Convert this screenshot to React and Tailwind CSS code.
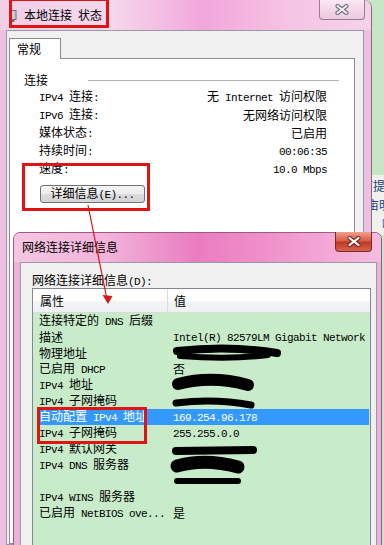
import React from 'react';

const ASCII = /([\x20-\x7e]+)/;

// SimSun-like mix: CJK in Noto, latin runs in a narrow mono
function Mix({ t }) {
  return (
    <span className="whitespace-pre">
      {t.split(ASCII).map((s, i) =>
        s && /^[\x20-\x7e]+$/.test(s) ? (
          <span key={i} className="font-['Liberation_Mono',monospace] text-[11px] tracking-[-0.6px]">
            {s}
          </span>
        ) : (
          s
        )
      )}
    </span>
  );
}

function CloseX({ outline, fill }) {
  return (
    <svg width="14" height="11" viewBox="0 0 14 11">
      <path d="M2.5 2 L11.5 9 M11.5 2 L2.5 9" stroke={outline} strokeWidth="4.2" strokeLinecap="round" />
      <path d="M2.5 2 L11.5 9 M11.5 2 L2.5 9" stroke={fill} strokeWidth="2.2" strokeLinecap="round" />
    </svg>
  );
}

const statusRows = [
  ['IPv4 连接:', '无 Internet 访问权限'],
  ['IPv6 连接:', '无网络访问权限'],
  ['媒体状态:', '已启用'],
  ['持续时间:', '00:06:35'],
  ['速度:', '10.0 Mbps'],
];

const detailRows = [
  ['连接特定的 DNS 后缀', ''],
  ['描述', 'Intel(R) 82579LM Gigabit Network'],
  ['物理地址', ''],
  ['已启用 DHCP', '否'],
  ['IPv4 地址', ''],
  ['IPv4 子网掩码', ''],
  ['自动配置 IPv4 地址', '169.254.96.178', true],
  ['IPv4 子网掩码', '255.255.0.0'],
  ['IPv4 默认网关', ''],
  ['IPv4 DNS 服务器', ''],
  ['', ''],
  ['IPv4 WINS 服务器', ''],
  ['已启用 NetBIOS ove...', '是'],
];

export default function App() {
  return (
    <div className="relative w-[384px] h-[545px] overflow-hidden bg-[#c6e6c6] text-[12px] text-black font-['Noto_Sans_CJK_SC',sans-serif]">
      {/* window behind, peeking on the right */}
      <div className="absolute left-[355px] top-[175px] w-[40px] h-[60px] bg-[#eef2ea] text-[#203a86] leading-[19px] pl-[6px] pt-[1px]">
        <div>可提</div>
        <div className="pl-[6px]">亩明</div>
        <div className="pl-[21px]">哪</div>
      </div>

      {/* 本地连接 状态 */}
      <div className="absolute left-0 top-0 w-[372px] h-[545px] rounded-tr-[8px] border-r border-[#8a6a80] bg-[#eebfe0] flex flex-col">
        <div className="relative h-[30px] shrink-0 rounded-tr-[8px] bg-[linear-gradient(90deg,#f0cfe6_0%,#f6d8ec_30%,#f2a6dc_55%,#f6c4e4_78%,#f4d2ea_100%)] flex items-center pl-[9px] pt-[2px]">
          <svg width="8" height="12" viewBox="0 0 8 12">
            <rect x="1" y="0.5" width="6" height="9" fill="#c8ccd4" stroke="#6a6e78" />
            <rect x="2.5" y="10" width="3" height="2" fill="#6a6e78" />
          </svg>
          <span className="ml-[7px] leading-[14px]">
            <Mix t="本地连接 状态" />
          </span>
          <div className="absolute left-[319px] top-0 w-[46px] h-[20px] rounded-b-[4px] border border-t-0 border-[#9c7a92] bg-[linear-gradient(180deg,#fbe8f4,#ecc8de)] flex items-center justify-center">
            <CloseX outline="#6e6e7c" fill="#eeeef2" />
          </div>
        </div>

        <div className="ml-[6px] mr-[7px] flex-1 bg-[#f0f0f0] border border-[#9a9aa4] pt-[7px] pl-[2px] flex flex-col">
          <div className="relative z-10 -mb-px w-[52px] h-[21px] bg-white border border-b-0 border-[#898c95] pl-[7px] leading-[20px]">
            常规
          </div>
          <div className="flex-1 mr-[8px] bg-white border border-[#898c95] pt-[14px] pl-[14px] pr-[27px] flex flex-col">
            <div className="flex items-center h-[14px] leading-[14px]">
              <span>连接</span>
              <div className="flex-1 h-px bg-[#b4b4b4] ml-[40px] -mr-[12px]" />
            </div>
            <div className="mt-px flex flex-col">
              {statusRows.map(([k, v]) => (
                <div key={k} className="h-[18px] flex items-center justify-between pl-[15px] leading-[14px]">
                  <Mix t={k} />
                  <Mix t={v} />
                </div>
              ))}
            </div>
            <div className="mt-[7px] ml-[16px] w-[105px] h-[18px] rounded-[3px] border border-[#707070] bg-[linear-gradient(180deg,#f4f4f4_0%,#ececec_50%,#dcdcdc_52%,#d4d4d4_100%)] flex items-center justify-center leading-[14px]">
              <Mix t="详细信息(E)..." />
            </div>
          </div>
        </div>
      </div>

      {/* 网络连接详细信息 */}
      <div className="absolute left-[13px] top-[232px] w-[369px] h-[330px] rounded-t-[7px] border border-[#9a5a88] bg-[#eeb2d8] flex flex-col">
        <div className="relative h-[29px] shrink-0 rounded-t-[6px] bg-[linear-gradient(90deg,#f4c6e2_0%,#f2b4da_25%,#ea7cc0_50%,#f092cc_70%,#f6bce0_100%)] flex items-center pl-[8px] pb-[2px]">
          <span className="leading-[14px]">网络连接详细信息</span>
          <div className="absolute left-[321px] top-[-1px] w-[37px] h-[20px] rounded-b-[4px] border border-t-0 border-[#7a2a24] bg-[linear-gradient(180deg,#eea090_0%,#d8604a_45%,#c03a24_55%,#d8644c_100%)] flex items-center justify-center">
            <CloseX outline="#7a2a20" fill="#ffffff" />
          </div>
        </div>

        <div className="ml-[6px] mr-[4px] flex-1 bg-[#f0f0f0] border border-[#9a9aa4] pt-[9px] pl-[11px] pr-[5px] flex flex-col">
          <div className="h-[16px] leading-[16px]">
            <Mix t="网络连接详细信息(D):" />
          </div>
          <div className="flex-1 border border-[#828790] bg-[#c8ecca] overflow-hidden">
            <div className="h-[24px] flex bg-[linear-gradient(180deg,#ffffff_0%,#ffffff_50%,#f3f4f6_52%,#eef0f2_100%)] border-b border-[#d6dcd6]">
              <div className="w-[135px] pl-[7px] border-r border-[#dcdcdc] flex items-center">属性</div>
              <div className="pl-[6px] flex items-center">值</div>
            </div>
            {detailRows.map(([k, v, sel], i) => (
              <div
                key={i}
                className={`h-[16px] ml-[4px] mr-px flex items-center leading-[16px] ${sel ? 'bg-[#3399ff] text-white' : ''}`}
              >
                <div className="w-[136px] pl-[2px] whitespace-nowrap overflow-hidden">
                  <Mix t={k} />
                </div>
                <div className="flex-1 whitespace-nowrap overflow-hidden">
                  <Mix t={v} />
                </div>
              </div>
            ))}
          </div>
        </div>
      </div>

      {/* annotations: red boxes, arrow, redaction scribbles */}
      <div className="absolute left-[9px] top-[-2px] w-[100px] h-[30px] border-[3px] border-[#e01414]" />
      <div className="absolute left-[22px] top-[163px] w-[128px] h-[48px] border-[3px] border-[#e01414]" />
      <div className="absolute left-[37px] top-[407px] w-[110px] h-[37px] border-[3px] border-[#e01414]" />
      <svg className="absolute left-0 top-0 pointer-events-none" width="384" height="545" viewBox="0 0 384 545">
        <line x1="88" y1="205" x2="106.5" y2="297" stroke="#d81818" strokeWidth="1.2" />
        <polygon points="102.5,295 112.5,296 108,304" fill="#d81818" />
        <g stroke="#000" strokeLinecap="round" fill="none">
          <path d="M177 351 Q230 345 277 353" strokeWidth="8" />
          <path d="M180 356 Q230 360 268 355" strokeWidth="6" />
          <path d="M178 384 Q212 375 248 385" strokeWidth="12" />
          <path d="M176 403 Q214 398 251 405" strokeWidth="7" />
          <path d="M176 451 L253 450" strokeWidth="8" />
          <path d="M177 466 Q205 458 238 467" strokeWidth="13" />
          <path d="M177 481 L238 481" strokeWidth="6" />
        </g>
      </svg>
    </div>
  );
}
